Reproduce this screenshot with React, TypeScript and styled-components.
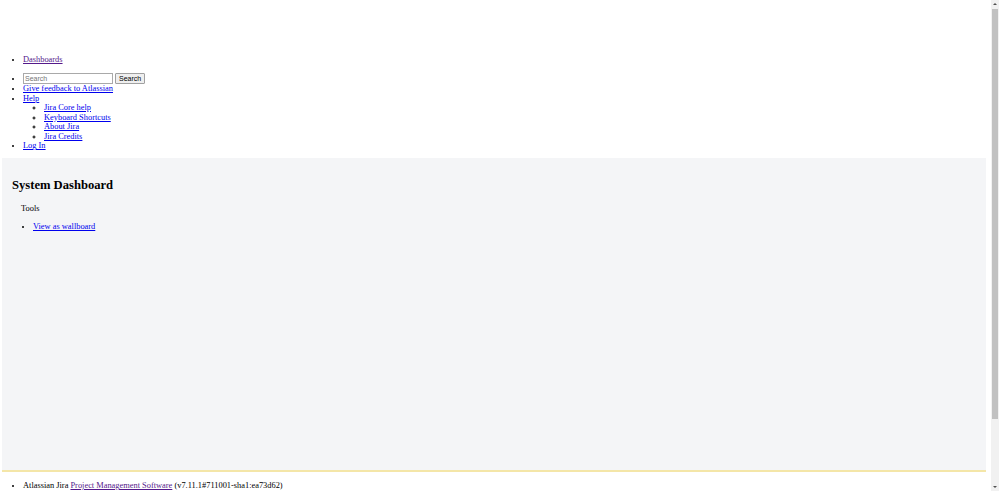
import React from 'react';
import styled, { createGlobalStyle } from 'styled-components';

const GlobalStyle = createGlobalStyle`
  html {
    overflow: hidden;
  }
  body {
    margin: 0;
    font-family: 'Liberation Serif', 'Times New Roman', serif;
    font-size: 8.4px;
    color: #000;
    background: #fff;
  }
  a {
    color: #0000ee;
  }
`;

const Page = styled.div`
  display: flex;
  flex-direction: column;
  padding-right: 13px;
`;

/* stand-in for the browser scrollbar seen in the screenshot */
const ScrollTrack = styled.div`
  position: fixed;
  top: 0;
  right: 0;
  width: 8px;
  height: 100vh;
  display: flex;
  flex-direction: column;
  background: #f1f1f1;
`;

const ScrollArrow = styled.div<{ $down?: boolean }>`
  height: 8px;
  display: flex;
  align-items: center;
  justify-content: center;
  &::after {
    content: '';
    border-left: 2px solid transparent;
    border-right: 2px solid transparent;
    ${(p) => (p.$down ? 'border-top: 2px solid #505050;' : 'border-bottom: 2px solid #505050;')}
  }
`;

const ScrollThumb = styled.div`
  margin: 1px 1px 0;
  height: 410px;
  background: #c1c1c1;
`;

const ScrollSpacer = styled.div`
  flex: 1;
`;

const Header = styled.header`
  padding-top: 47px;
`;

const NavList = styled.ul<{ $nested?: boolean; $last?: boolean }>`
  margin: ${(p) => (p.$nested ? '0' : p.$last ? '8.4px 0 7.4px' : '8.4px 0')};
  padding-left: ${(p) => (p.$nested ? '21px' : '23px')};
  list-style: ${(p) => (p.$nested ? 'circle' : 'disc')};
  line-height: 9.5px;
`;

const NavLink = styled.a<{ $visited?: boolean }>`
  color: ${(p) => (p.$visited ? '#551a8b' : '#0000ee')};
`;

const SearchItem = styled.li`
  height: 11px;
  line-height: 11px;
`;

const SearchForm = styled.form`
  display: inline-flex;
  align-items: center;
  gap: 2px;
  vertical-align: top;
`;

const SearchInput = styled.input`
  box-sizing: border-box;
  width: 90px;
  height: 11px;
  padding: 0 1px;
  border: 1px solid #a9a9a9;
  font-family: 'Liberation Sans', Arial, sans-serif;
  font-size: 7px;
  &::placeholder {
    color: #757575;
  }
`;

const SearchButton = styled.button`
  box-sizing: border-box;
  height: 11px;
  padding: 0 3px;
  border: 1px solid #a0a0a0;
  border-radius: 1px;
  background: #efefef;
  font-family: 'Liberation Sans', Arial, sans-serif;
  font-size: 7px;
  line-height: 9px;
  color: #000;
`;

const Panel = styled.main`
  box-sizing: border-box;
  margin-left: 2px;
  height: 314px;
  padding: 20px 10px 0;
  background: #f4f5f7;
  border-bottom: 2px solid #f4e6a8;
`;

const Title = styled.h1`
  margin: 0 0 11px;
  font-size: 12.6px;
  line-height: 15px;
  font-weight: bold;
`;

const ToolsBlock = styled.div`
  padding-left: 9px;
`;

const ToolsLabel = styled.div`
  line-height: 10px;
`;

const ToolsList = styled.ul`
  margin: 8px 0 0;
  padding-left: 12px;
  line-height: 10px;
`;

const FooterList = styled.ul`
  margin: 9px 0 0;
  padding-left: 23px;
  line-height: 10px;
`;

const App = () => {
  return (
    <Page>
      <GlobalStyle />
      <ScrollTrack>
        <ScrollArrow />
        <ScrollThumb />
        <ScrollSpacer />
        <ScrollArrow $down />
      </ScrollTrack>
      <Header>
        <NavList>
          <li>
            <NavLink href="#" $visited>
              Dashboards
            </NavLink>
          </li>
        </NavList>
        <NavList $last>
          <SearchItem>
            <SearchForm onSubmit={(e) => e.preventDefault()}>
              <SearchInput placeholder="Search" />
              <SearchButton type="submit">Search</SearchButton>
            </SearchForm>
          </SearchItem>
          <li>
            <NavLink href="#">Give feedback to Atlassian</NavLink>
          </li>
          <li>
            <NavLink href="#">Help</NavLink>
            <NavList $nested>
              <li>
                <NavLink href="#">Jira Core help</NavLink>
              </li>
              <li>
                <NavLink href="#">Keyboard Shortcuts</NavLink>
              </li>
              <li>
                <NavLink href="#">About Jira</NavLink>
              </li>
              <li>
                <NavLink href="#">Jira Credits</NavLink>
              </li>
            </NavList>
          </li>
          <li>
            <NavLink href="#">Log In</NavLink>
          </li>
        </NavList>
      </Header>
      <Panel>
        <Title>System Dashboard</Title>
        <ToolsBlock>
          <ToolsLabel>Tools</ToolsLabel>
          <ToolsList>
            <li>
              <NavLink href="#">View as wallboard</NavLink>
            </li>
          </ToolsList>
        </ToolsBlock>
      </Panel>
      <footer>
        <FooterList>
          <li>
            Atlassian Jira{' '}
            <NavLink href="#" $visited>
              Project Management Software
            </NavLink>{' '}
            (v7.11.1#711001-sha1:ea73d62)
          </li>
        </FooterList>
      </footer>
    </Page>
  );
};

export default App;
